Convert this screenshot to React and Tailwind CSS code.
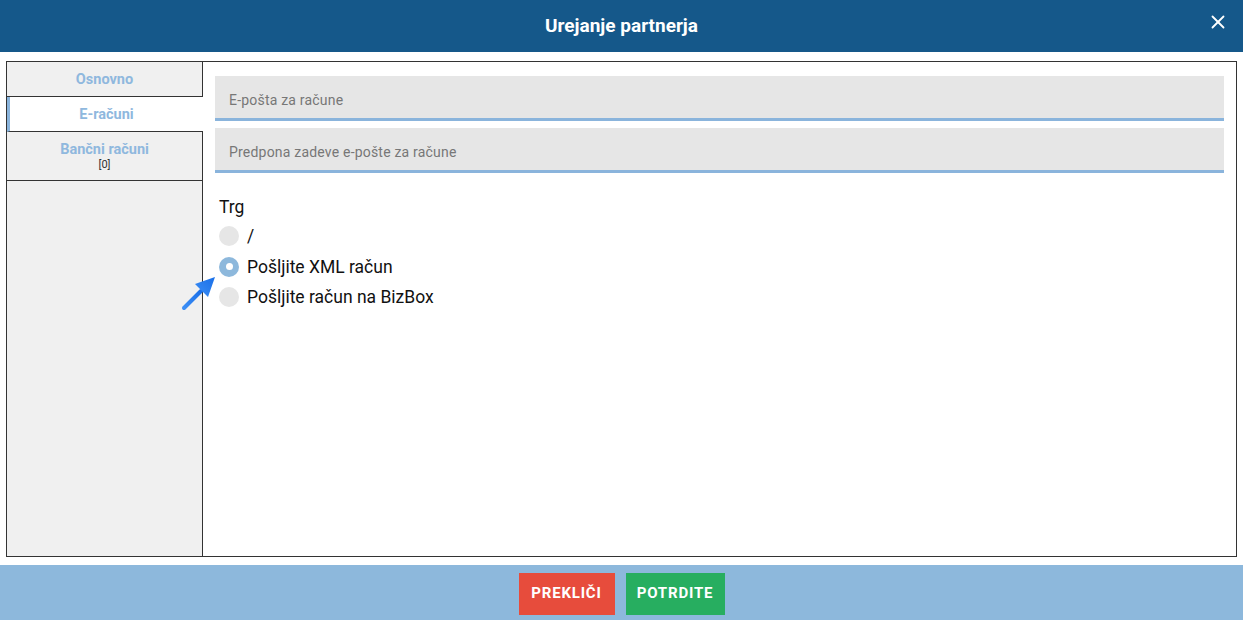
import React, { useState } from 'react'
import { X } from 'lucide-react'

const tabs = [
  { id: 'osnovno', label: 'Osnovno' },
  { id: 'eracuni', label: 'E-računi' },
  { id: 'bancni', label: 'Bančni računi', count: '[0]' },
]

const options = ['/', 'Pošljite XML račun', 'Pošljite račun na BizBox']

const App = () => {
  const [active, setActive] = useState('eracuni')
  const [trg, setTrg] = useState(1)

  return (
    <div className="w-[1243px] h-[620px] flex flex-col bg-white font-['Roboto','Liberation_Sans',sans-serif]">
      {/* Header */}
      <div className="h-[52px] shrink-0 bg-[#15588a] flex items-center justify-center relative">
        <span className="text-white text-[19px] font-bold">Urejanje partnerja</span>
        <button className="absolute right-[14px] top-[11px] text-white">
          <X size={22} strokeWidth={2} />
        </button>
      </div>

      {/* Body */}
      <div className="flex-1 mx-[6px] mt-[9px] mb-[8px] border border-[#333] flex">
        {/* Sidebar */}
        <div className="w-[196px] shrink-0 flex flex-col bg-[#f0f0f0]">
          {tabs.map((t) => {
            const isActive = t.id === active
            return (
              <button
                key={t.id}
                onClick={() => setActive(t.id)}
                className={`flex flex-col items-center justify-center pt-[1px] border-b border-[#333] text-[14.5px] font-bold text-[#8fb8de] ${
                  isActive ? 'bg-white border-l-[3px] border-l-[#8ab4dc] h-[35px]' : 'border-r'
                } ${t.count ? 'h-[49px]' : 'h-[35px]'}`}
              >
                <span className="leading-[16px]">{t.label}</span>
                {t.count && <span className="text-[11px] font-normal text-[#333] leading-[14px]">{t.count}</span>}
              </button>
            )
          })}
          <div className="flex-1 border-r border-[#333]" />
        </div>

        {/* Content */}
        <div className="flex-1 px-[12px] pt-[14px]">
          <div className="flex flex-col gap-[7px]">
            <input
              placeholder="E-pošta za račune"
              className="h-[45px] bg-[#e6e6e6] border-b-[3px] border-[#8ab4dc] px-[14px] pt-[6px] text-[14px] tracking-[0.2px] text-[#555] placeholder:text-[#777] outline-none"
            />
            <input
              placeholder="Predpona zadeve e-pošte za račune"
              className="h-[45px] bg-[#e6e6e6] border-b-[3px] border-[#8ab4dc] px-[14px] pt-[6px] text-[14px] tracking-[0.2px] text-[#555] placeholder:text-[#777] outline-none"
            />
          </div>

          <div className="mt-[23px] pl-[4px]">
            <div className="text-[17.5px] text-[#111] leading-[22px]">Trg</div>
            <div className="relative flex flex-col mt-[3px]">
              {options.map((o, i) => (
                <label key={o} onClick={() => setTrg(i)} className="flex items-center gap-[8px] h-[30.5px] cursor-pointer">
                  <span
                    className={`w-[20px] h-[20px] rounded-full flex items-center justify-center ${
                      trg === i ? 'bg-[#8db8dc]' : 'bg-[#e6e6e6]'
                    }`}
                  >
                    {trg === i && <span className="w-[7px] h-[7px] rounded-full bg-white" />}
                  </span>
                  <span className="text-[17.5px] text-[#111]">{o}</span>
                </label>
              ))}

              {/* pointer arrow */}
              <svg className="absolute left-[-38px] top-[54px]" width="36" height="36" viewBox="0 0 36 36">
                <defs>
                  <linearGradient id="ar" x1="0" y1="1" x2="1" y2="0">
                    <stop offset="0" stopColor="#3d8ff5" />
                    <stop offset="1" stopColor="#1a6fe8" />
                  </linearGradient>
                </defs>
                <path d="M3 33 L20 16" stroke="url(#ar)" strokeWidth="4" strokeLinecap="round" />
                <path d="M34 2 L14 9 L27 22 Z" fill="url(#ar)" />
              </svg>
            </div>
          </div>
        </div>
      </div>

      {/* Footer */}
      <div className="h-[55px] shrink-0 bg-[#8db8dc] flex items-center justify-center gap-[11px]">
        <button className="w-[96px] h-[42px] mt-[2px] bg-[#e74c3c] text-white text-[15px] font-bold tracking-[0.8px]">PREKLIČI</button>
        <button className="w-[99px] h-[42px] mt-[2px] bg-[#27ae60] text-white text-[15px] font-bold tracking-[0.8px]">POTRDITE</button>
      </div>
    </div>
  )
}

export default App
